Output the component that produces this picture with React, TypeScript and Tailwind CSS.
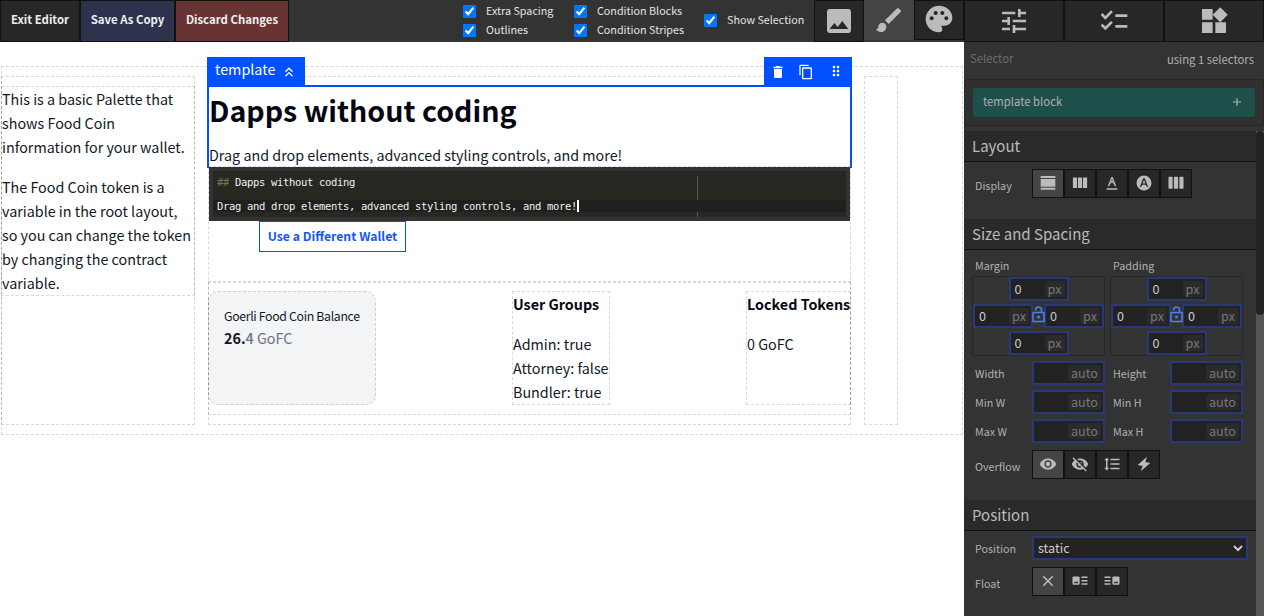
import React from 'react';
import {
  MdImage, MdBrush, MdPalette, MdTune, MdChecklist, MdWidgets, MdDelete, MdContentCopy, MdDragIndicator,
  MdKeyboardDoubleArrowUp, MdVisibility, MdVisibilityOff, MdFormatLineSpacing, MdClose, MdAdd,
} from 'react-icons/md';

const outline = 'outline-1 -outline-offset-1 outline-dashed outline-black/15';

function Check({ label }: { label: string }) {
  return (
    <label className="flex h-[19px] items-center text-[10.75px] leading-[19px] text-[#e4e4e4]">
      <input type="checkbox" defaultChecked className="m-0 mr-[10px] size-[13px]" />
      <span className="-translate-y-px">{label}</span>
    </label>
  );
}

function Svg({ d, size = 'size-5' }: { d: string; size?: string }) {
  return (
    <svg viewBox="0 0 24 24" fill="currentColor" className={`${size} shrink-0`}>
      <path fillRule="evenodd" d={d} />
    </svg>
  );
}

const paths = {
  block: 'M1 1.500h22v3H1zM1 6h22v11.500H1zM1 19h22v3H1z',
  inlineBlock: 'M2.500 4.500h5.500v14H2.500zM9.300 4.500h5.500v14H9.300zM16 4.500h5.500v14H16z',
  inline: 'M9.6 14l2.4-6.7L14.4 14M11 3L5.5 17h2.3l1.1-3h6.2l1.1 3h2.3L13 3zM9.6 12L12 5.7 14.4 12zM4 20h16v2H4z',
  circle: 'M12 2a10 10 0 1 0 0 20 10 10 0 0 0 0-20zM11 5.5h2L17.6 17h-2l-1-2.6H9.4l-1 2.6h-2zM10.1 12.6h3.8L12 7.6z',
  flex: 'M3 3.5h3.5a1 1 0 0 1 1 1v14a1 1 0 0 1-1 1H3a1 1 0 0 1-1-1v-14a1 1 0 0 1 1-1zM10.2 3.5h3.6a1 1 0 0 1 1 1v14a1 1 0 0 1-1 1h-3.6a1 1 0 0 1-1-1v-14a1 1 0 0 1 1-1zM17.5 3.5H21a1 1 0 0 1 1 1v14a1 1 0 0 1-1 1h-3.5a1 1 0 0 1-1-1v-14a1 1 0 0 1 1-1z',
  bolt: 'M16.5 1L2.500 13.500l7.500 1.500-3 8L21.500 10.500l-7.500-1.500z',
  floatLeft: 'M3.500 6H10a1.500 1.500 0 0 1 1.500 1.500v8A1.500 1.500 0 0 1 10 17H3.500A1.500 1.500 0 0 1 2 15.500v-8A1.500 1.500 0 0 1 3.500 6zM3.500 15h6.500l-2-3-1.700 2-1.200-1.200zM14 6h8v2h-8zM14 10.500h8v2h-8zM14 15h8v2h-8z',
  floatRight: 'M2 6h8v2H2zM2 10.500h8v2H2zM2 15h8v2H2zM14 6h6.500A1.500 1.500 0 0 1 22 7.500v8a1.500 1.500 0 0 1-1.500 1.500H14a1.500 1.500 0 0 1-1.500-1.500v-8A1.500 1.500 0 0 1 14 6zM14 15h6.500l-2-3-1.700 2-1.200-1.200z',
};

function IconGroup({ icons }: { icons: React.ReactNode[] }) {
  return (
    <div className="flex">
      {icons.map((icon, i) => (
        <button
          key={i}
          className={`flex h-[29px] w-8 items-center justify-center border border-[#111] pb-px text-[#bbb] ${i === 0 ? 'bg-[#444]' : 'bg-[#272727]'}`}
        >
          {icon}
        </button>
      ))}
    </div>
  );
}

function UnitInput({ value, unit, wide }: { value?: string; unit: string; wide?: boolean }) {
  return (
    <div className={`flex h-6 items-center justify-between border-2 border-[#293977] bg-[#222] pr-[2px] pl-1 text-[12.6px] leading-[20px] text-[#ccc] ${wide ? 'w-[73px]' : 'w-[60px]'}`}>
      <span>{value}</span>
      <span className={`flex h-4 items-center justify-center rounded-[2px] bg-[#2b2b2b] text-[#777] ${wide ? 'w-[33px]' : 'w-5'}`}>{unit}</span>
    </div>
  );
}

function Lock() {
  return (
    <svg viewBox="0 0 13 17" className="mx-[-1px] h-[17px] w-[13px] shrink-0 -translate-y-[2px]" fill="none" stroke="#4f7df3" strokeWidth="1.500">
      <rect x="1" y="6.500" width="11" height="9" rx="0.500" />
      <path d="M3.500 4.500V4a3 3 0 0 1 6 0v2.500" />
      <circle cx="6.500" cy="11" r="1.500" fill="#4f7df3" stroke="none" />
    </svg>
  );
}

function SpacingBox({ label }: { label: string }) {
  return (
    <div className="w-[133px]">
      <div className="h-[26px] pl-[3px] text-[10.75px] leading-[32px]">{label}</div>
      <div className="flex h-20 flex-col items-center justify-between border border-[#282828]">
        <UnitInput value="0" unit="px" />
        <div className="flex w-full items-center justify-between">
          <UnitInput value="0" unit="px" />
          <Lock />
          <UnitInput value="0" unit="px" />
        </div>
        <UnitInput value="0" unit="px" />
      </div>
    </div>
  );
}

function Section({ title, className, children }: { title: string; className: string; children: React.ReactNode }) {
  return (
    <section className={className}>
      <h2 className="h-[31px] border-b border-[#111] bg-[#2a2a2a] pl-2 text-[15px] leading-[30px] text-[#bbb]">{title}</h2>
      {children}
    </section>
  );
}

function Sidebar() {
  const tabs = [MdTune, MdChecklist, MdWidgets];
  const sizes = [['Width', 'Height'], ['Min W', 'Min H'], ['Max W', 'Max H']];
  return (
    <aside className="flex h-[616px] w-[300px] shrink-0 flex-col overflow-hidden bg-[#333] text-[#b0b0b0]">
      <div className="flex h-[42px] shrink-0">
        {tabs.map((Icon, i) => (
          <button key={i} className="flex h-[42px] w-[100px] items-center justify-center border border-[#111] bg-[#272727] text-[#bbb]">
            <Icon className="size-8" />
          </button>
        ))}
      </div>
      <div className="flex h-[37px] shrink-0 justify-between pr-[10px] pl-[6px] text-[11.3px]">
        <span className="leading-[32px] text-[#6e6e6e]">Selector</span>
        <span className="leading-[35px]">using 1 selectors</span>
      </div>
      <div className="h-[47px] shrink-0 rounded-[2px] border border-[#262626] bg-[#303030] px-2 pt-2">
        <div className="flex h-[29px] items-center justify-between rounded-[3px] bg-[#1f4f4a] pr-[11px] pl-[10px] text-[11.3px]">
          <span className="pb-[2px]">template block</span>
          <MdAdd className="size-[14px] -translate-y-px" />
        </div>
      </div>
      <div className="mt-[5px] flex min-h-0 flex-1">
        <div className="w-[292px] text-[10.75px]">
          <Section title="Layout" className="h-[88px]">
            <div className="flex pt-[7px] pl-[11px]">
              <span className="w-[57px] leading-[33px]">Display</span>
              <IconGroup
                icons={[paths.block, paths.inlineBlock, paths.inline, paths.circle, paths.flex].map((d, i) => (
                  <Svg key={i} d={d} size={i === 2 ? 'size-[16px]' : i === 0 ? 'size-4' : 'size-[18px]'} />
                ))}
              />
            </div>
          </Section>
          <Section title="Size and Spacing" className="h-[281px]">
            <div className="flex gap-[5px] pl-2">
              <SpacingBox label="Margin" />
              <SpacingBox label="Padding" />
            </div>
            <div className="flex flex-col gap-[5px] pt-[5px] pl-[11px]">
              {sizes.map(([a, b]) => (
                <div key={a} className="flex h-6 leading-[26px]">
                  <span className="w-[57px]">{a}</span>
                  <UnitInput unit="auto" wide />
                  <span className="w-[65px] pl-2">{b}</span>
                  <UnitInput unit="auto" wide />
                </div>
              ))}
            </div>
            <div className="flex pt-[7px] pl-[11px]">
              <span className="w-[57px] leading-[33px]">Overflow</span>
              <IconGroup
                icons={[
                  <MdVisibility className="size-[18px]" />,
                  <MdVisibilityOff className="size-[18px]" />,
                  <MdFormatLineSpacing className="size-[18px]" />,
                  <Svg d={paths.bolt} size="size-4" />,
                ]}
              />
            </div>
          </Section>
          <Section title="Position" className="h-[116px]">
            <div className="flex h-[29px] pt-[5px] pl-[11px]">
              <span className="w-[57px] leading-[25px]">Position</span>
              <div className="flex h-6 w-[216px] items-center justify-between border-2 border-[#293977] bg-[#222] pr-[3px] pl-1 text-[12.6px] leading-5 text-[#ccc]">
                <span>static</span>
                <svg viewBox="0 0 10 7" className="h-[7px] w-[10px]" fill="none" stroke="#ccc" strokeWidth="2">
                  <path d="M1 1l4 4 4-4" />
                </svg>
              </div>
            </div>
            <div className="flex pt-[7px] pl-[11px]">
              <span className="w-[57px] leading-[33px]">Float</span>
              <IconGroup
                icons={[
                  <MdClose className="size-[18px]" />,
                  <Svg d={paths.floatLeft} size="size-[18px]" />,
                  <Svg d={paths.floatRight} size="size-[18px]" />,
                ]}
              />
            </div>
          </Section>
        </div>
        <div className="w-2 bg-[#555]">
          <div className="h-[184px] rounded-[4px] bg-[#222]" />
        </div>
      </div>
    </aside>
  );
}

function TopBar() {
  const btn = 'h-[42px] border border-[#111] text-[11.4px] font-bold text-[#eee] pb-[2px]';
  return (
    <header className="flex h-[42px] bg-[#333]">
      <button className={`${btn} w-20 bg-[#272727]`}>Exit Editor</button>
      <button className={`${btn} w-[95px] bg-[#2d324d]`}>Save As Copy</button>
      <button className={`${btn} w-[114px] bg-[#673433]`}>Discard Changes</button>
      <div className="ml-auto flex pt-[2px]">
        <div className="w-[111px]">
          <Check label="Extra Spacing" />
          <Check label="Outlines" />
        </div>
        <div className="w-[130px]">
          <Check label="Condition Blocks" />
          <Check label="Condition Stripes" />
        </div>
        <div className="w-[110px] pt-[9px]">
          <Check label="Show Selection" />
        </div>
      </div>
      <div className="flex text-[#bbb]">
        <button className="flex h-[42px] w-[50px] items-center justify-center border border-[#111] bg-[#272727]"><MdImage className="size-8" /></button>
        <button className="flex h-10 w-[50px] items-center justify-center bg-[#444]"><MdBrush className="size-8" /></button>
        <button className="flex h-10 w-[50px] items-center justify-center border border-[#111] bg-[#272727]"><MdPalette className="size-8 -translate-y-px" /></button>
      </div>
    </header>
  );
}

function Selection() {
  return (
    <div className="absolute top-[-19px] left-[-1px] h-[112px] w-[645px]">
      <div className="flex h-[28px] justify-between">
        <div className="flex w-[98px] items-center bg-[#0050ff] pl-2 text-[14.33px] text-white">
          <span className="-translate-y-[2px]">template</span>
          <MdKeyboardDoubleArrowUp className="ml-[6px] size-4 translate-y-px" />
        </div>
        <div className="flex w-[88px] items-center bg-[#0050ff] pt-[2px] text-white">
          <MdDelete className="ml-[6px] size-4" />
          <MdContentCopy className="ml-[12px] size-4" />
          <MdDragIndicator className="ml-[14px] size-4 -translate-y-px" />
        </div>
      </div>
      <div className="h-[83px] border-2 border-b-0 border-[#0050ff]" />
    </div>
  );
}

export default function App() {
  return (
    <div className="flex h-[616px] w-[1264px] overflow-hidden bg-white font-['Noto_Sans_CJK_SC',sans-serif] text-[#111827]">
      <main className="w-[964px]">
        <TopBar />
        <div className={`mt-6 ml-px flex h-[369px] w-[962px] gap-[13px] py-[10px] ${outline}`}>
          <div className={`w-[194px] pt-[10px] ${outline}`}>
            <div className={`flex h-[210px] flex-col gap-4 p-px text-[14.33px] leading-6 ${outline}`}>
              <p>This is a basic Palette that<br />shows Food Coin<br />information for your wallet.</p>
              <p>The Food Coin token is a<br />variable in the root layout,<br />so you can change the token<br />by changing the contract<br />variable.</p>
            </div>
          </div>
          <div className={`relative w-[643px] ${outline}`}>
            <div className="mt-[10px] h-[196px] border-b border-dashed border-black/15">
              <div className="h-[81px] border-b border-dashed border-black/15 pl-px">
                <h1 className="pt-[5px] text-[28.6px] leading-[38px] font-bold text-[#030712]">Dapps without coding</h1>
                <p className="pt-[14px] text-[14.33px] leading-6">Drag and drop elements, advanced styling controls, and more!</p>
              </div>
              <div className="relative z-10 ml-px h-[54px] w-[641px] border-4 border-[#333] bg-[#272822] pt-[5px] font-['DejaVu_Sans_Mono',monospace] text-[10.5px] leading-3 tracking-[-0.32px] whitespace-pre text-[#f0f0ea]">
                <div className="absolute top-[5px] bottom-0 left-[484px] w-px bg-[#555651]" />
                <div className="h-3 pl-1"><span className="text-[#6b7a48]">##</span> Dapps without coding</div>
                <div className="h-3" />
                <div className="relative flex h-3 bg-[#202020] pl-1">Drag and drop elements, advanced styling controls, and more!<span className="h-3 w-[2px] bg-white" /></div>
              </div>
              <button className="ml-[51px] flex h-[31px] w-[147px] items-center justify-center border border-[#0050ff] pb-px text-[12.25px] font-bold text-[#1455ff]">Use a Different Wallet</button>
            </div>
            <div className={`flex h-[133px] justify-between py-[9px] ${outline}`}>
              <div className={`h-[114px] w-[168px] rounded-[10px] bg-[#f3f4f6] pt-[15px] pl-4 ${outline}`}>
                <div className="text-[12.3px] leading-5 tracking-[-0.33px]">Goerli Food Coin Balance</div>
                <div className="text-[14.33px] leading-6 text-[#6b7280]"><b className="text-[#111827]">26.</b><b className="font-medium">4</b> GoFC</div>
              </div>
              <div className={`h-[114px] w-[98px] p-px text-[14.33px] leading-6 whitespace-nowrap ${outline}`}>
                <h3 className="mb-4 font-bold text-[#030712]">User Groups</h3>
                Admin: true<br />Attorney: false<br />Bundler: true
              </div>
              <div className={`h-[114px] w-[105px] p-px text-[14.33px] leading-6 whitespace-nowrap ${outline}`}>
                <h3 className="mb-4 font-bold text-[#030712]">Locked Tokens</h3>
                0 GoFC
              </div>
            </div>
            <Selection />
          </div>
          <div className={`w-[34px] ${outline}`} />
        </div>
      </main>
      <Sidebar />
    </div>
  );
}
